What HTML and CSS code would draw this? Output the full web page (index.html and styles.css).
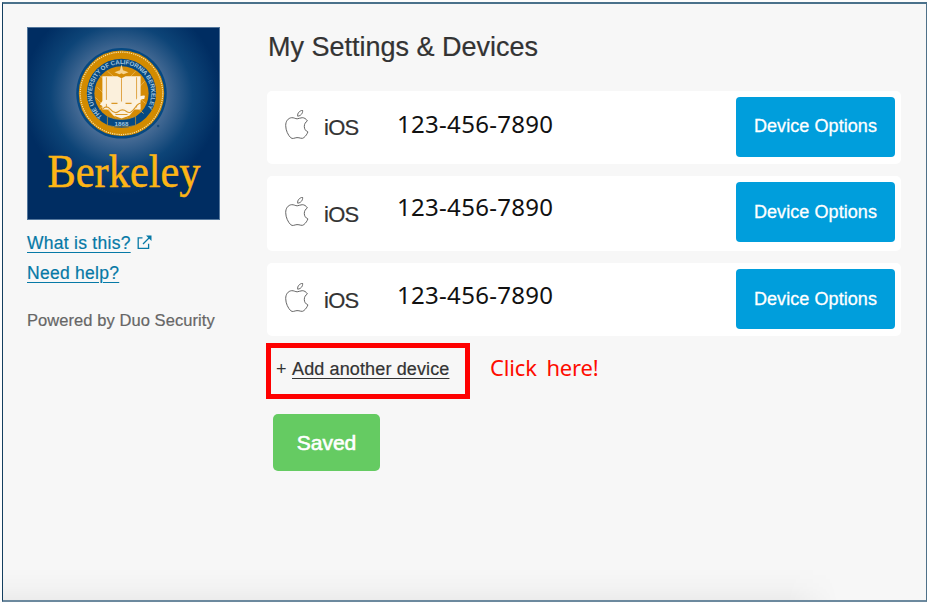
FILE: index.html
```html
<!DOCTYPE html>
<html lang="en">
<head>
<meta charset="utf-8">
<title>My Settings &amp; Devices</title>
<link rel="stylesheet" href="styles.css">
</head>
<body>
<svg width="0" height="0" class="defs" aria-hidden="true">
  <symbol id="apple" viewBox="0 0 24 31">
    <path d="M12.2 8.8C10.5 8.8 8.700 7.500 6.700 7.700C3 8 .7 11.300.7 15.500C.7 20.600 3.200 25.200 5.600 27.600C7.600 29.500 9.300 27.800 12 27.600C14.800 27.400 16.800 29.400 18.900 27.600C20.800 26 22.200 23.900 22.900 21.900C20.600 20.900 19.300 19 19.300 16.400C19.300 14 20.500 12.100 22.400 10.900C21 8.700 19.300 7.700 17.200 7.700C15.200 7.700 13.700 8.800 12.200 8.800Z"/>
    <path d="M12.700 6.200C12.200 3.200 14.500.7 17.600.3C18 3.200 15.900 5.800 12.700 6.200Z"/>
  </symbol>
</svg>
<div class="frame">
  <aside class="sidebar">
    <svg class="logo" viewBox="0 0 192 192">
      <defs>
        <radialGradient id="glow" gradientUnits="userSpaceOnUse" cx="94" cy="68" r="98">
          <stop offset="0" stop-color="#5f80a3"/>
          <stop offset=".45" stop-color="#456a94"/>
          <stop offset=".72" stop-color="#0d4477"/>
          <stop offset="1" stop-color="#002d62"/>
        </radialGradient>
      </defs>
      <rect width="192" height="192" fill="url(#glow)"/>
      <rect x=".5" y=".5" width="191" height="191" fill="none" stroke="#54779c"/>
      <circle cx="94" cy="66" r="45" fill="#064982"/>
      <circle cx="94" cy="66" r="38.5" fill="none" stroke="#d28b00" stroke-width="8"/>
      <circle cx="94" cy="66" r="41" fill="none" stroke="#f9dfa0" stroke-width="1.2" stroke-dasharray="1.2 1"/>
      <circle cx="94" cy="66" r="27" fill="#d48b05"/>
      <path d="M72 48L116 86M70 60L100 90M68 70L88 90M80 44L118 76M108 44L72 82M117 54L86 88" stroke="#e9b658" stroke-width=".8"/>
      <path d="M94 37L95.500 43L101 45L96 47L94 46L92 47L87 45L92.500 43Z" fill="#f7d48e"/>
      <path d="M75 49H90L94 51L98 49H113V82H107L102 88L94 91L86 88L81 82H75Z" fill="#fbf0dc"/>
      <path d="M79 50V80M109 50V80M94 51V74" stroke="#e0a548" stroke-width="1"/>
      <path d="M74 78Q78 71 82 77T90 79T99 79T108 76T117 70" fill="none" stroke="#fdf3df" stroke-width="3.500"/>
      <path d="M75 82Q79 77 83 82T91 84T99 84T107 81T114 76M84 76H90M98 76H104M88 87H100" fill="none" stroke="#d99828" stroke-width="1.1"/>
      <path d="M80 89Q94 95 108 89V98Q94 101 80 98Z" fill="#064982" stroke="#bd9133" stroke-width=".8"/>
      <g transform="translate(94 66)">
        <path id="arc" d="M-19 23A29.500 29.500 0 1 1 19 23" fill="none"/>
        <text class="seal-text"><textPath href="#arc" textLength="133">THE UNIVERSITY OF CALIFORNIA BERKELEY</textPath></text>
      </g>
      <text class="seal-text" x="94" y="98" text-anchor="middle">1868</text>
      <circle cx="130.500" cy="98.500" r="1.200" fill="#174a7b"/>
      <text class="wordmark" x="20.500" y="159" textLength="152" lengthAdjust="spacingAndGlyphs">Berkeley</text>
    </svg>
    <nav class="links">
      <div class="link-row"><a class="link what">What is this?</a>
        <svg class="external" viewBox="0 0 15 15"><path d="M5.500 2.800H1.200V13.400H11.600V8.800M6 9L12.500 2.500"/><path class="tip" d="M9 .5H14.500V6Z"/></svg>
      </div>
      <div class="link-row"><a class="link need">Need help?</a></div>
    </nav>
    <p class="powered">Powered by Duo Security</p>
  </aside>
  <main class="content">
    <h1 class="title">My Settings &amp; Devices</h1>
    <section class="devices">
      <div class="device first">
        <svg class="apple"><use href="#apple"/></svg><span class="os">iOS</span><span class="phone">123-456-7890</span><button class="options">Device Options</button>
      </div>
      <div class="device second">
        <svg class="apple"><use href="#apple"/></svg><span class="os">iOS</span><span class="phone">123-456-7890</span><button class="options">Device Options</button>
      </div>
      <div class="device third">
        <svg class="apple"><use href="#apple"/></svg><span class="os">iOS</span><span class="phone">123-456-7890</span><button class="options">Device Options</button>
      </div>
    </section>
    <div class="add-row">
      <div class="callout"><span class="plus">+</span><a class="add">Add another device</a></div>
      <span class="hint">Click here!</span>
    </div>
    <button class="saved">Saved</button>
  </main>
  <div class="bottom-shadow"></div>
</div>
</body>
</html>
```
FILE: styles.css
```css
* { box-sizing: border-box; }
body {
  margin: 0;
  padding: 2px 0 0 2px;
  height: 603px;
  overflow: hidden;
  background: #fdfdfd;
  font-family: "Liberation Sans", Arial, sans-serif;
  color: #333;
}
.defs { position: absolute; }
.frame {
  position: relative;
  display: flex;
  width: 925px;
  height: 600px;
  padding: 24px 0 0 24px;
  background: #f7f7f7;
  border: 1px solid #2c5876;
  border-top: 2px solid #4a718b;
  border-right-color: #4f7189;
  border-bottom: 2px solid #6c899e;
  border-left-color: #143f60;
}
.sidebar { width: 240px; flex: none; }
.logo { display: block; width: 193px; height: 193px; margin-top: -1px; }
.wordmark { font-family: "Liberation Serif", serif; font-size: 46px; fill: #fdb515; stroke: #fdb515; stroke-width: .5; }
.seal-text { font-family: "Liberation Sans", sans-serif; font-size: 6.2px; font-weight: bold; fill: #a5c5dc; }
.links { padding-top: 8px; }
.link-row { display: flex; height: 30px; line-height: 30px; }
.link { color: #0679a6; font-size: 17.5px; letter-spacing: .27px; -webkit-text-stroke: .2px #0679a6; text-decoration: underline; text-underline-offset: 3px; text-decoration-thickness: 1px; }
.external { width: 15px; height: 15px; margin: 7px 0 0 6px; fill: none; stroke: #0679a6; stroke-width: 1.3; }
.external .tip { fill: #0679a6; stroke: none; }
.powered { margin: 17px 0 0; font-size: 16.5px; line-height: 30px; color: #666; letter-spacing: .07px; -webkit-text-stroke: .2px #666; }
.content { width: 634px; }
.title { margin: 3px 0 0 1px; font-size: 27px; line-height: 32px; font-weight: normal; letter-spacing: 0; -webkit-text-stroke: .2px #333; }
.devices { display: flex; flex-direction: column; gap: 12px; margin-top: 28px; }
.device { display: flex; height: 73px; padding: 6px 6px 0 18px; background: #fff; border-radius: 5px; }
.second { height: 75px; }
.apple { width: 24px; height: 31px; margin-top: 13px; fill: none; stroke: #555; stroke-width: .9; }
.second .apple { margin-top: 15px; }
.third .apple { margin-top: 14px; }
.os { width: 73px; margin: 15px 0 0 15px; font-size: 22px; line-height: 32px; letter-spacing: -.7px; -webkit-text-stroke: .2px #333; }
.second .os { margin-top: 17px; }
.third .os { margin-top: 16px; }
.phone { flex: 1; margin-top: 11px; font-family: "Noto Sans", sans-serif; font-size: 24px; line-height: 32px; color: #111; letter-spacing: .3px; white-space: nowrap; }
.second .phone { margin-top: 9px; }
.third .phone { margin-top: 10px; }
.options { width: 159px; height: 60px; padding: 0; border: 0; border-radius: 4px; background: #009edc; color: #fff; font: 18px "Liberation Sans", sans-serif; letter-spacing: .07px; -webkit-text-stroke: .3px #fff; }
.first .options { padding-bottom: 2px; }
.add-row { display: flex; margin: 7px 0 0 -1px; }
.callout { display: flex; width: 204px; height: 56px; padding-left: 5px; border: 5px solid #fe0000; font-size: 18px; line-height: 42px; }
.plus { width: 16px; }
.add { letter-spacing: .13px; -webkit-text-stroke: .2px #333; text-decoration: underline; text-underline-offset: 3px; text-decoration-thickness: 1px; }
.hint { margin: 8px 0 0 20px; font-family: "Noto Sans", sans-serif; font-size: 22px; line-height: 32px; color: #fe0c00; letter-spacing: -.15px; word-spacing: 4px; }
.saved { display: block; width: 107px; height: 57px; margin: 15px 0 0 6px; padding: 0; border: 0; border-radius: 5px; background: #65cb62; color: #fff; font: 21px "Liberation Sans", sans-serif; -webkit-text-stroke: .6px #fff; }
.bottom-shadow { position: absolute; left: 0; bottom: 0; width: 835px; height: 32px; background: linear-gradient(to bottom, rgba(0,0,0,0), rgba(0,0,0,.015) 55%, rgba(0,0,0,.045)); -webkit-mask-image: linear-gradient(to right, #000 94%, transparent); mask-image: linear-gradient(to right, #000 94%, transparent); }
```
